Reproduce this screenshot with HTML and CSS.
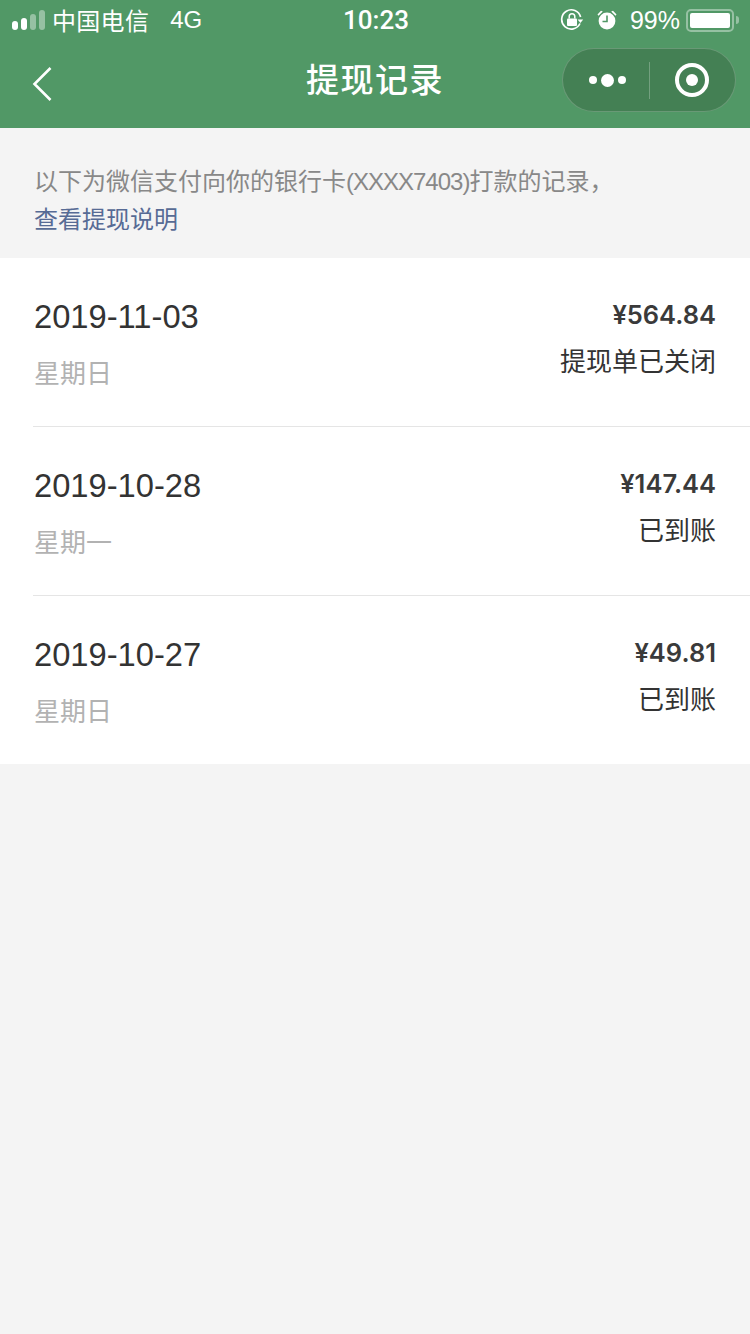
FILE: index.html
```html
<!DOCTYPE html>
<html lang="zh-CN">
<head>
    <meta charset="UTF-8">
    <meta name="viewport" content="width=device-width, initial-scale=1.0">
    <title>提现记录</title>
    <link rel="stylesheet" href="styles.css">
</head>
<body>
    <div class="header">
        <div class="status-bar">
            <div class="status-left">
                <div class="signal">
                    <span class="bar bar-1"></span>
                    <span class="bar bar-2"></span>
                    <span class="bar bar-3"></span>
                    <span class="bar bar-4"></span>
                </div>
                <span class="carrier">中国电信</span>
                <span class="network">4G</span>
            </div>
            <div class="status-time">10:23</div>
            <div class="status-right">
                <svg class="icon-lock" width="24" height="24" viewBox="0 0 24 24">
                    <path d="M20 15.5A9.6 9.6 0 1 1 20.6 9" fill="none" stroke="#fff" stroke-width="1.7"/>
                    <path d="M17.6 11.5h5.6l-2.8 3.4z" fill="#fff"/>
                    <rect x="7" y="10.5" width="10" height="7.5" rx="1" fill="#fff"/>
                    <path d="M9.2 10.5V8.6a2.8 2.8 0 0 1 5.6 0v1.9" fill="none" stroke="#fff" stroke-width="1.5"/>
                </svg>
                <svg class="icon-alarm" width="22" height="22" viewBox="0 0 22 22">
                    <circle cx="11" cy="12" r="8.4" fill="#fff"/>
                    <path d="M11 6.5V12.5H6.5" fill="none" stroke="#519866" stroke-width="1.6"/>
                    <path d="M1.5 5.5L5 1.8L6.8 2.6L2.5 6.8zM20.5 5.5L17 1.8L15.2 2.6L19.500 6.8z" fill="#fff"/>
                </svg>
                <span class="battery-text">99%</span>
                <div class="battery">
                    <div class="battery-body"><div class="battery-level"></div></div>
                    <div class="battery-tip"></div>
                </div>
            </div>
        </div>
        <div class="nav-bar">
            <div class="back">
                <svg width="22" height="36" viewBox="0 0 22 36">
                    <path d="M18.500 2L2.500 18L18.500 34" fill="none" stroke="#fff" stroke-width="2.6"/>
                </svg>
            </div>
            <div class="nav-title">提现记录</div>
            <div class="capsule">
                <div class="capsule-more">
                    <span class="dot"></span>
                    <span class="dot dot-big"></span>
                    <span class="dot"></span>
                </div>
                <div class="capsule-line"></div>
                <div class="capsule-close">
                    <span class="ring"><span class="ring-dot"></span></span>
                </div>
            </div>
        </div>
    </div>

    <div class="notice">
        <div>以下为微信支付向你的银行卡<span class="card-no">(XXXX7403)</span>打款的记录，</div>
        <div class="notice-link">查看提现说明</div>
    </div>

    <div class="list">
        <div class="row">
            <div class="row-left">
                <div class="date">2019-11-03</div>
                <div class="weekday">星期日</div>
            </div>
            <div class="row-right">
                <div class="amount">¥564.84</div>
                <div class="state">提现单已关闭</div>
            </div>
        </div>
        <div class="row">
            <div class="row-left">
                <div class="date">2019-10-28</div>
                <div class="weekday">星期一</div>
            </div>
            <div class="row-right">
                <div class="amount">¥147.44</div>
                <div class="state">已到账</div>
            </div>
        </div>
        <div class="row">
            <div class="row-left">
                <div class="date">2019-10-27</div>
                <div class="weekday">星期日</div>
            </div>
            <div class="row-right">
                <div class="amount">¥49.81</div>
                <div class="state">已到账</div>
            </div>
        </div>
    </div>
</body>
</html>
```

FILE: styles.css
```css
body {
    font-family: "Liberation Sans", "Noto Sans CJK SC", sans-serif;
    background-color: #f4f4f4;
    color: #333;
    margin: 0;
    padding: 0;
}
.header {
    background-color: #519866;
    color: #fff;
    height: 128px;
}
.status-bar {
    height: 40px;
    display: flex;
    justify-content: space-between;
    align-items: center;
    position: relative;
    padding: 0 10px 0 12px;
    font-size: 24px;
}
.status-left {
    display: flex;
    align-items: center;
}
.signal {
    display: flex;
    align-items: flex-end;
    gap: 3px;
    width: 33px;
    height: 20px;
}
.bar {
    width: 6px;
    border-radius: 3px;
    background-color: #fff;
}
.bar-1 {
    height: 9px;
}
.bar-2 {
    height: 12px;
}
.bar-3 {
    height: 16px;
    background-color: rgba(255, 255, 255, 0.4);
}
.bar-4 {
    height: 20px;
    background-color: rgba(255, 255, 255, 0.4);
}
.carrier {
    margin-left: 7px;
    margin-top: -2px;
    letter-spacing: 0.3px;
}
.network {
    margin-left: 21px;
}
.status-time {
    position: absolute;
    left: 343px;
    font-family: Roboto, sans-serif;
    font-weight: 500;
    font-size: 26px;
}
.status-right {
    display: flex;
    align-items: center;
}
.icon-lock {
    margin-right: 12px;
}
.icon-alarm {
    margin-right: 12px;
}
.battery-text {
    font-size: 25px;
    margin-right: 6px;
}
.battery {
    display: flex;
    align-items: center;
}
.battery-body {
    width: 48px;
    height: 23px;
    box-sizing: border-box;
    padding: 2px;
    border: 2px solid rgba(255, 255, 255, 0.4);
    border-radius: 5px;
}
.battery-level {
    height: 100%;
    width: 100%;
    background-color: #fff;
    border-radius: 2px;
}
.battery-tip {
    width: 3px;
    height: 8px;
    margin-left: 2px;
    margin-right: 1px;
    background-color: rgba(255, 255, 255, 0.4);
    border-radius: 0 3px 3px 0;
}
.nav-bar {
    height: 88px;
    display: flex;
    align-items: center;
    justify-content: space-between;
    position: relative;
    padding: 0 14px 8px 32px;
    box-sizing: border-box;
}
.back {
    display: flex;
    margin-top: 8px;
}
.nav-title {
    position: absolute;
    left: 0;
    right: 0;
    top: 19px;
    text-align: center;
    font-size: 33px;
    font-weight: 500;
    letter-spacing: 1.5px;
    line-height: 44px;
}
.capsule {
    width: 174px;
    height: 64px;
    box-sizing: border-box;
    border: 1px solid rgba(255, 255, 255, 0.2);
    border-radius: 32px;
    background-color: #448054;
    display: flex;
    align-items: center;
}
.capsule-more {
    width: 88px;
    display: flex;
    align-items: center;
    justify-content: center;
    gap: 4px;
}
.dot {
    width: 8px;
    height: 8px;
    border-radius: 50%;
    background-color: #fff;
}
.dot-big {
    width: 13px;
    height: 13px;
}
.capsule-line {
    width: 1px;
    height: 37px;
    margin-left: -2px;
    background-color: rgba(255, 255, 255, 0.25);
}
.capsule-close {
    flex: 1;
    display: flex;
    justify-content: center;
    padding-right: 2px;
}
.ring {
    width: 34px;
    height: 34px;
    box-sizing: border-box;
    border: 4px solid #fff;
    border-radius: 50%;
    display: flex;
    align-items: center;
    justify-content: center;
}
.ring-dot {
    width: 12px;
    height: 12px;
    border-radius: 50%;
    background-color: #fff;
}
.notice {
    height: 130px;
    box-sizing: border-box;
    padding: 35px 34px 0;
    font-size: 24px;
    line-height: 38px;
    color: #888;
}
.card-no {
    letter-spacing: -1px;
}
.notice-link {
    color: #576b95;
}
.list {
    background-color: #fff;
    padding-left: 33px;
}
.row {
    height: 169px;
    box-sizing: border-box;
    padding: 38px 34px 0 0;
    display: flex;
    justify-content: space-between;
    border-bottom: 1px solid #e5e5e5;
}
.row:last-child {
    height: 168px;
    border-bottom: none;
}
.date {
    margin-left: 1px;
    font-size: 32.7px;
    line-height: 42px;
}
.weekday {
    margin-top: 18px;
    margin-left: 1px;
    font-size: 26px;
    line-height: 36px;
    color: #b2b2b2;
}
.row-right {
    text-align: right;
}
.amount {
    font-family: Inter, "Noto Sans CJK SC", sans-serif;
    font-size: 25.5px;
    font-weight: 600;
    line-height: 38px;
    color: #3a3a3a;
}
.state {
    margin-top: 10px;
    font-size: 26px;
    line-height: 36px;
}
```
